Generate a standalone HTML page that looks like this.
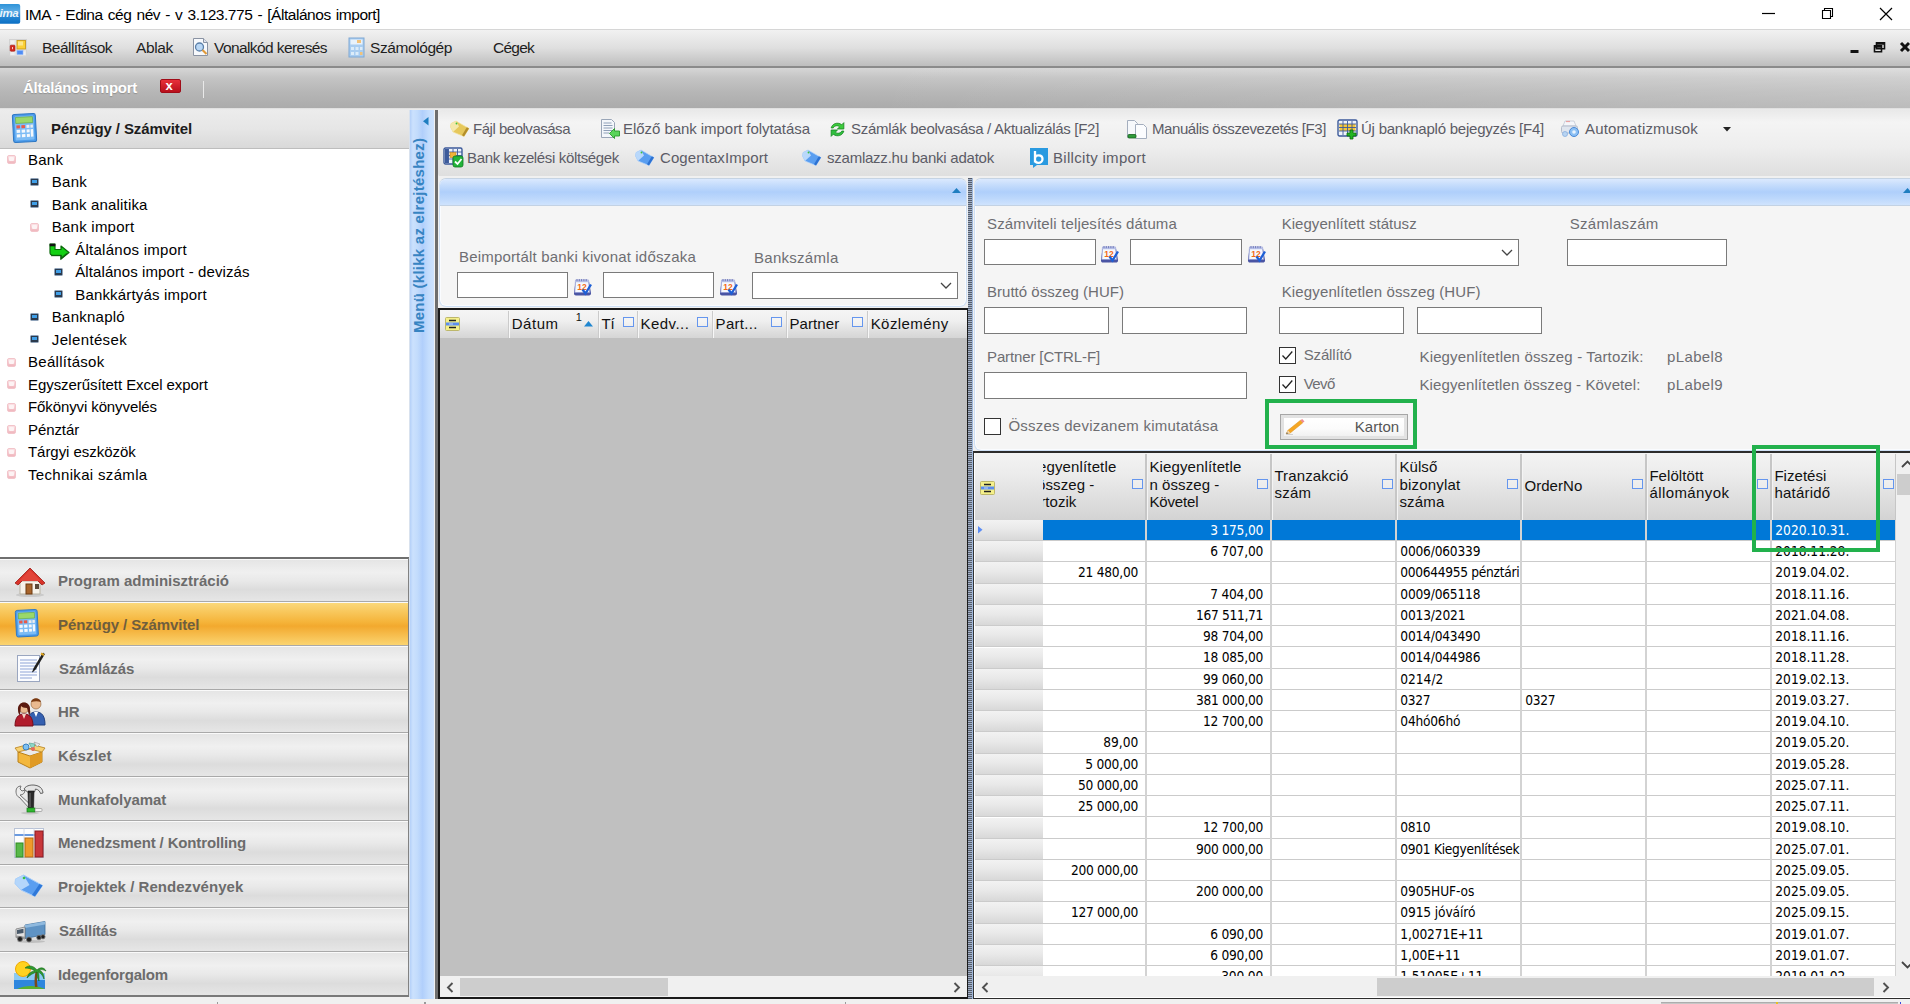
<!DOCTYPE html>
<html lang="hu"><head><meta charset="utf-8"><title>IMA - Általános import</title>
<style>
html,body{margin:0;padding:0;}
body{width:1910px;height:1004px;position:relative;overflow:hidden;background:#f0f0f0;font-family:"Liberation Sans",Arial,sans-serif;font-size:15px;}
div{position:absolute;box-sizing:border-box;}
.t{position:absolute;line-height:1;white-space:pre;}
svg{position:absolute;overflow:visible;}
.inp{background:#fff;border:1px solid #7a7a7a;}
.cell{position:absolute;}

</style></head>
<body>
<div style="left:0px;top:0px;width:1910px;height:29px;background:#fff;"></div>
<svg style="left:0;top:4px" width="21" height="20" viewBox="0 0 21 20"><defs><linearGradient id="ai" x1="0" y1="0" x2="0" y2="1"><stop offset="0" stop-color="#2f93d8"/><stop offset=".35" stop-color="#58aae4"/><stop offset=".6" stop-color="#2a8ad6"/><stop offset="1" stop-color="#0b6fc4"/></linearGradient></defs><rect x="-3" y="0" width="23.2" height="19.8" rx="2" fill="url(#ai)"/><text x="-0.5" y="12.6" font-family="Liberation Sans, sans-serif" font-size="11.5" font-style="italic" font-weight="bold" fill="#eaf4fc" letter-spacing="-0.3">ima</text></svg>
<span class="t" style="top:6.58px;font-size:15.5px;color:#000;left:25px;letter-spacing:-0.464px;word-spacing:1.3px;">IMA - Edina cég név - v 3.123.775 - [Általános import]</span>
<svg style="left:1750px;top:0" width="160" height="29" viewBox="0 0 160 29"><path d="M12 13.5h13" stroke="#000" stroke-width="1.2" fill="none"/><path d="M72.5 10.5h8v8h-8z M74.5 10.5v-2h8v8h-2" stroke="#000" stroke-width="1.1" fill="none"/><path d="M130 8l12 12M142 8l-12 12" stroke="#000" stroke-width="1.2" fill="none"/></svg>
<div style="left:0px;top:29px;width:1910px;height:36.6px;background:linear-gradient(#f1f1f1,#dfdfdf 50%,#bebebe);border-top:1px solid #d6d6d6;"></div>
<div style="left:0px;top:65.6px;width:1910px;height:2.4px;background:#8b8b8b;"></div>
<svg style="left:9px;top:39px" width="18" height="18" viewBox="0 0 18 18"><rect x=".5" y=".5" width="17" height="16.5" fill="#e3e3e3" stroke="#d2d2d2"/><rect x="1.5" y="1.5" width="4" height="3.5" fill="#f1f1f1"/><rect x="1.5" y="13" width="4" height="3" fill="#eee"/><rect x="14" y="12.5" width="2.5" height="3.5" fill="#eee"/><rect x="8" y="1.5" width="8.5" height="8.5" fill="#fbd035" stroke="#c99a1a" stroke-width=".9"/><rect x="9" y="2.5" width="5" height="4" fill="#fde68a"/><rect x="1.2" y="6.2" width="4.8" height="6" rx=".8" fill="#d2281e" stroke="#a81810" stroke-width=".6"/><rect x="3" y="8" width="1" height="2.2" fill="#f7c9c4"/><rect x="8" y="11.5" width="6" height="4" fill="#4f8df5" stroke="#8fb6fa" stroke-width=".6"/></svg>
<span class="t" style="top:39.98px;font-size:15.5px;color:#1e1e1e;left:42px;letter-spacing:-0.530px;">Beállítások</span>
<span class="t" style="top:39.98px;font-size:15.5px;color:#1e1e1e;left:136px;letter-spacing:-0.356px;">Ablak</span>
<svg style="left:191px;top:37px" width="20" height="20" viewBox="0 0 20 20"><path d="M2.5 1.5h10l4 4v13h-14z" fill="#f7f9fc" stroke="#8a93a3"/><path d="M12.5 1.5v4h4" fill="#dde3ee" stroke="#8a93a3"/><circle cx="8.5" cy="10" r="4" fill="#b9d7f5" stroke="#5a7fa8" stroke-width="1.3"/><path d="M11.5 13l4 4" stroke="#e09a3a" stroke-width="2.2"/></svg>
<span class="t" style="top:39.98px;font-size:15.5px;color:#1e1e1e;left:214px;letter-spacing:-0.585px;">Vonalkód keresés</span>
<svg style="left:348px;top:37px" width="18" height="21" viewBox="0 0 18 21"><rect x="1" y="1" width="15" height="19" fill="#a9cdf0" stroke="#7fa8d4"/><rect x="2.5" y="2.5" width="12" height="5" fill="#e8f2fb"/><rect x="9" y="3" width="4" height="3" fill="#f1c27a"/><rect x="3" y="10" width="3" height="3" fill="#dcecf9"/><rect x="7.5" y="10" width="3" height="3" fill="#dcecf9"/><rect x="12" y="10" width="2.5" height="3" fill="#dcecf9"/><rect x="3" y="15" width="3" height="3" fill="#dcecf9"/><rect x="7.5" y="15" width="3" height="3" fill="#dcecf9"/><rect x="12" y="15" width="2.5" height="3" fill="#f1c27a"/></svg>
<span class="t" style="top:39.98px;font-size:15.5px;color:#1e1e1e;left:370px;letter-spacing:-0.417px;">Számológép</span>
<span class="t" style="top:39.98px;font-size:15.5px;color:#1e1e1e;left:493px;letter-spacing:-0.762px;">Cégek</span>
<svg style="left:1845px;top:36px" width="65" height="24" viewBox="0 0 65 24"><rect x="5.5" y="14" width="8" height="3" fill="#111"/><g transform="translate(0,-.8)"><path d="M31.5 7.5h8v6h-8z M29.5 10.5h7v6h-7z" fill="#e6e6e6" stroke="#111" stroke-width="1.6"/><path d="M31 8.3h9 M29 11.3h8" stroke="#111" stroke-width="2.4"/></g><path d="M56 7l8 8M64 7l-8 8" stroke="#111" stroke-width="3"/></svg>
<div style="left:0px;top:68px;width:1910px;height:39.6px;background:linear-gradient(90deg,rgba(255,255,255,0),rgba(255,255,255,0) 45%,rgba(255,255,255,.2)),linear-gradient(#d6d6d6,#c4c4c4 25%,#b6b6b6 60%,#ababab);"></div>
<span class="t" style="top:80.00px;font-size:15px;color:#fff;left:23px;font-weight:bold;letter-spacing:-0.272px;text-shadow:0 1px 1px rgba(120,120,120,.6);">Általános import</span>
<div style="left:160px;top:79px;width:21px;height:14px;background:linear-gradient(#e8303a,#b8101c);border:1px solid #a00c18;border-radius:2px;"></div>
<span class="t" style="top:78.70px;font-size:13px;color:#fff;left:165.5px;font-weight:bold;">x</span>
<div style="left:203px;top:81px;width:1px;height:17px;background:#e9e9e9;"></div>
<div style="left:0px;top:107.6px;width:1910px;height:2.4px;background:linear-gradient(#dcdcdc,#efefef);"></div>
<div style="left:0px;top:110px;width:409px;height:887px;background:#fff;"></div>
<div style="left:0px;top:110px;width:409px;height:39px;background:linear-gradient(#ececec,#e6e6e6 50%,#d9d9d9);border-bottom:1px solid #bdbdbd;"></div>
<svg style="left:11px;top:112px" width="28.0" height="32.0" viewBox="0 0 28 32"><g transform="rotate(-3 14 16)"><rect x="2" y="2" width="23" height="28" rx="2" fill="#4b9bea" stroke="#2f78c4"/><rect x="4" y="4" width="19" height="24" rx="1" fill="#7dbcf5"/><rect x="5" y="5" width="17" height="6" fill="#9ad86a" stroke="#5fa63a" stroke-width=".6"/><rect x="5.5" y="13" width="3.5" height="3" fill="#e85a4a"/><rect x="10.5" y="13" width="3.5" height="3" fill="#e85a4a"/><rect x="15.5" y="13" width="3" height="3" fill="#eee"/><rect x="19.5" y="13" width="2.5" height="3" fill="#eee"/><rect x="5.5" y="17.5" width="3.5" height="3" fill="#f4f8fc"/><rect x="10.5" y="17.5" width="3.5" height="3" fill="#f4f8fc"/><rect x="15.5" y="17.5" width="3" height="3" fill="#f4f8fc"/><rect x="19.5" y="17.5" width="2.5" height="7.5" fill="#f4f8fc"/><rect x="5.5" y="22" width="3.5" height="3" fill="#f4f8fc"/><rect x="10.5" y="22" width="3.5" height="3" fill="#f4f8fc"/><rect x="15.5" y="22" width="3" height="3" fill="#f4f8fc"/></g></svg>
<span class="t" style="top:121.00px;font-size:15px;color:#1c1c1c;left:51px;font-weight:bold;letter-spacing:-0.126px;">Pénzügy / Számvitel</span>
<div style="left:6.6px;top:155.4px;width:9px;height:9px;background:linear-gradient(#fbe3e6,#f0b6bd);border:1px solid #f3c4ca;border-radius:2px;"><div style="left:1px;top:1px;width:5px;height:4px;background:#fdf3f4;border-radius:1px"></div></div>
<span class="t" style="top:151.90px;font-size:15px;color:#000;left:28px;letter-spacing:0.249px;">Bank</span>
<div style="left:29.8px;top:177.9px;width:9px;height:8px;background:#2b3a4d;border:1px solid #8fa3ba;border-radius:1.5px;"><div style="left:1px;top:1px;width:5px;height:3px;background:#3f9fe8;"></div></div>
<span class="t" style="top:174.40px;font-size:15px;color:#000;left:51.8px;letter-spacing:0.249px;">Bank</span>
<div style="left:29.8px;top:200.4px;width:9px;height:8px;background:#2b3a4d;border:1px solid #8fa3ba;border-radius:1.5px;"><div style="left:1px;top:1px;width:5px;height:3px;background:#3f9fe8;"></div></div>
<span class="t" style="top:196.90px;font-size:15px;color:#000;left:51.8px;letter-spacing:0.171px;">Bank analitika</span>
<div style="left:29.8px;top:222.9px;width:9px;height:9px;background:linear-gradient(#fbe3e6,#f0b6bd);border:1px solid #f3c4ca;border-radius:2px;"><div style="left:1px;top:1px;width:5px;height:4px;background:#fdf3f4;border-radius:1px"></div></div>
<span class="t" style="top:219.40px;font-size:15px;color:#000;left:51.8px;letter-spacing:0.232px;">Bank import</span>
<svg style="left:49px;top:242.9px" width="21" height="17" viewBox="0 0 21 17"><path d="M1 1h5v5.500h6V3l8 6.500-8 6.500V12.500H4a3 3 0 0 1-3-3z" fill="#12d012" stroke="#0a6a0a" stroke-width="1.200" stroke-linejoin="round"/><path d="M.700 .700h5.600v2.600H.700z" fill="#111"/><path d="M2 12.500h10v3l6-5" stroke="#0a5a0a" stroke-width="1.600" fill="none" opacity=".7"/></svg>
<span class="t" style="top:241.90px;font-size:15px;color:#000;left:75.2px;letter-spacing:0.265px;">Általános import</span>
<div style="left:54.2px;top:267.9px;width:9px;height:8px;background:#2b3a4d;border:1px solid #8fa3ba;border-radius:1.5px;"><div style="left:1px;top:1px;width:5px;height:3px;background:#3f9fe8;"></div></div>
<span class="t" style="top:264.40px;font-size:15px;color:#000;left:75.2px;letter-spacing:0.102px;">Általános import - devizás</span>
<div style="left:54.2px;top:290.4px;width:9px;height:8px;background:#2b3a4d;border:1px solid #8fa3ba;border-radius:1.5px;"><div style="left:1px;top:1px;width:5px;height:3px;background:#3f9fe8;"></div></div>
<span class="t" style="top:286.90px;font-size:15px;color:#000;left:75.2px;letter-spacing:0.184px;">Bankkártyás import</span>
<div style="left:29.8px;top:312.9px;width:9px;height:8px;background:#2b3a4d;border:1px solid #8fa3ba;border-radius:1.5px;"><div style="left:1px;top:1px;width:5px;height:3px;background:#3f9fe8;"></div></div>
<span class="t" style="top:309.40px;font-size:15px;color:#000;left:51.8px;letter-spacing:0.244px;">Banknapló</span>
<div style="left:29.8px;top:335.4px;width:9px;height:8px;background:#2b3a4d;border:1px solid #8fa3ba;border-radius:1.5px;"><div style="left:1px;top:1px;width:5px;height:3px;background:#3f9fe8;"></div></div>
<span class="t" style="top:331.90px;font-size:15px;color:#000;left:51.8px;letter-spacing:0.348px;">Jelentések</span>
<div style="left:6.6px;top:357.9px;width:9px;height:9px;background:linear-gradient(#fbe3e6,#f0b6bd);border:1px solid #f3c4ca;border-radius:2px;"><div style="left:1px;top:1px;width:5px;height:4px;background:#fdf3f4;border-radius:1px"></div></div>
<span class="t" style="top:354.40px;font-size:15px;color:#000;left:28px;letter-spacing:0.284px;">Beállítások</span>
<div style="left:6.6px;top:380.4px;width:9px;height:9px;background:linear-gradient(#fbe3e6,#f0b6bd);border:1px solid #f3c4ca;border-radius:2px;"><div style="left:1px;top:1px;width:5px;height:4px;background:#fdf3f4;border-radius:1px"></div></div>
<span class="t" style="top:376.90px;font-size:15px;color:#000;left:28px;letter-spacing:-0.072px;">Egyszerűsített Excel export</span>
<div style="left:6.6px;top:402.9px;width:9px;height:9px;background:linear-gradient(#fbe3e6,#f0b6bd);border:1px solid #f3c4ca;border-radius:2px;"><div style="left:1px;top:1px;width:5px;height:4px;background:#fdf3f4;border-radius:1px"></div></div>
<span class="t" style="top:399.40px;font-size:15px;color:#000;left:28px;letter-spacing:-0.106px;">Főkönyvi könyvelés</span>
<div style="left:6.6px;top:425.4px;width:9px;height:9px;background:linear-gradient(#fbe3e6,#f0b6bd);border:1px solid #f3c4ca;border-radius:2px;"><div style="left:1px;top:1px;width:5px;height:4px;background:#fdf3f4;border-radius:1px"></div></div>
<span class="t" style="top:421.90px;font-size:15px;color:#000;left:28px;letter-spacing:-0.086px;">Pénztár</span>
<div style="left:6.6px;top:447.9px;width:9px;height:9px;background:linear-gradient(#fbe3e6,#f0b6bd);border:1px solid #f3c4ca;border-radius:2px;"><div style="left:1px;top:1px;width:5px;height:4px;background:#fdf3f4;border-radius:1px"></div></div>
<span class="t" style="top:444.40px;font-size:15px;color:#000;left:28px;letter-spacing:-0.045px;">Tárgyi eszközök</span>
<div style="left:6.6px;top:470.4px;width:9px;height:9px;background:linear-gradient(#fbe3e6,#f0b6bd);border:1px solid #f3c4ca;border-radius:2px;"><div style="left:1px;top:1px;width:5px;height:4px;background:#fdf3f4;border-radius:1px"></div></div>
<span class="t" style="top:466.90px;font-size:15px;color:#000;left:28px;letter-spacing:0.330px;">Technikai számla</span>
<div style="left:0px;top:557px;width:409px;height:2px;background:#6f6f6f;"></div>
<div style="left:0px;top:558.6px;width:408px;height:43.72px;background:linear-gradient(#e5e5e5,#f0f0f0 30%,#e9e9e9 50%,#dcdcdc 72%,#e6e6e6);border-top:1px solid #fafafa;border-bottom:1px solid #a9a9a9;"></div>
<span class="t" style="top:573.10px;font-size:15px;color:#6c6c6c;left:58px;font-weight:bold;letter-spacing:0.005px;">Program adminisztráció</span>
<div style="left:0px;top:602.32px;width:408px;height:43.72px;background:linear-gradient(#fbd87a,#f5b43a 45%,#f2a92e 55%,#fbd470);border-top:1px solid #fafafa;border-bottom:1px solid #a9a9a9;"></div>
<span class="t" style="top:616.82px;font-size:15px;color:#6e5e3e;left:58px;font-weight:bold;letter-spacing:-0.105px;">Pénzügy / Számvitel</span>
<div style="left:0px;top:646.04px;width:408px;height:43.72px;background:linear-gradient(#e5e5e5,#f0f0f0 30%,#e9e9e9 50%,#dcdcdc 72%,#e6e6e6);border-top:1px solid #fafafa;border-bottom:1px solid #a9a9a9;"></div>
<span class="t" style="top:660.54px;font-size:15px;color:#6c6c6c;left:59px;font-weight:bold;letter-spacing:-0.066px;">Számlázás</span>
<div style="left:0px;top:689.76px;width:408px;height:43.72px;background:linear-gradient(#e5e5e5,#f0f0f0 30%,#e9e9e9 50%,#dcdcdc 72%,#e6e6e6);border-top:1px solid #fafafa;border-bottom:1px solid #a9a9a9;"></div>
<span class="t" style="top:704.26px;font-size:15px;color:#6c6c6c;left:58px;font-weight:bold;letter-spacing:0.014px;">HR</span>
<div style="left:0px;top:733.48px;width:408px;height:43.72px;background:linear-gradient(#e5e5e5,#f0f0f0 30%,#e9e9e9 50%,#dcdcdc 72%,#e6e6e6);border-top:1px solid #fafafa;border-bottom:1px solid #a9a9a9;"></div>
<span class="t" style="top:747.98px;font-size:15px;color:#6c6c6c;left:58px;font-weight:bold;letter-spacing:0.153px;">Készlet</span>
<div style="left:0px;top:777.2px;width:408px;height:43.72px;background:linear-gradient(#e5e5e5,#f0f0f0 30%,#e9e9e9 50%,#dcdcdc 72%,#e6e6e6);border-top:1px solid #fafafa;border-bottom:1px solid #a9a9a9;"></div>
<span class="t" style="top:791.70px;font-size:15px;color:#6c6c6c;left:58px;font-weight:bold;letter-spacing:-0.085px;">Munkafolyamat</span>
<div style="left:0px;top:820.9200000000001px;width:408px;height:43.72px;background:linear-gradient(#e5e5e5,#f0f0f0 30%,#e9e9e9 50%,#dcdcdc 72%,#e6e6e6);border-top:1px solid #fafafa;border-bottom:1px solid #a9a9a9;"></div>
<span class="t" style="top:835.42px;font-size:15px;color:#6c6c6c;left:58px;font-weight:bold;letter-spacing:-0.147px;">Menedzsment / Kontrolling</span>
<div style="left:0px;top:864.64px;width:408px;height:43.72px;background:linear-gradient(#e5e5e5,#f0f0f0 30%,#e9e9e9 50%,#dcdcdc 72%,#e6e6e6);border-top:1px solid #fafafa;border-bottom:1px solid #a9a9a9;"></div>
<span class="t" style="top:879.14px;font-size:15px;color:#6c6c6c;left:58px;font-weight:bold;letter-spacing:0.043px;">Projektek / Rendezvények</span>
<div style="left:0px;top:908.36px;width:408px;height:43.72px;background:linear-gradient(#e5e5e5,#f0f0f0 30%,#e9e9e9 50%,#dcdcdc 72%,#e6e6e6);border-top:1px solid #fafafa;border-bottom:1px solid #a9a9a9;"></div>
<span class="t" style="top:922.86px;font-size:15px;color:#6c6c6c;left:59px;font-weight:bold;letter-spacing:-0.248px;">Szállítás</span>
<div style="left:0px;top:952.08px;width:408px;height:43.72px;background:linear-gradient(#e5e5e5,#f0f0f0 30%,#e9e9e9 50%,#dcdcdc 72%,#e6e6e6);border-top:1px solid #fafafa;border-bottom:1px solid #a9a9a9;"></div>
<span class="t" style="top:966.58px;font-size:15px;color:#6c6c6c;left:58px;font-weight:bold;letter-spacing:-0.180px;">Idegenforgalom</span>
<div style="left:408px;top:558px;width:1.7px;height:439px;background:#828282;"></div>
<div style="left:0px;top:995.3px;width:409.7px;height:1.6px;background:#7a7a7a;"></div>
<svg style="left:13px;top:565.6px" width="34" height="32" viewBox="0 0 34 32"><ellipse cx="17" cy="29" rx="14" ry="2" fill="#bbb" opacity=".6"/><path d="M7 15h20v13H7z" fill="#f7f3ea" stroke="#b9b3a3"/><path d="M17 2L2 17l3 2L17 7l12 12 3-2z" fill="#d8332a" stroke="#9c1b15" stroke-width=".8"/><path d="M17 4L6 15h22z" fill="#e2453a"/><rect x="13" y="18" width="6" height="10" fill="#a8642a" stroke="#6e3d12"/><rect x="22" y="18" width="4" height="5" fill="#5b4a3a"/></svg>
<svg style="left:14px;top:608.32px" width="26.599999999999998" height="30.4" viewBox="0 0 28 32"><g transform="rotate(-3 14 16)"><rect x="2" y="2" width="23" height="28" rx="2" fill="#4b9bea" stroke="#2f78c4"/><rect x="4" y="4" width="19" height="24" rx="1" fill="#7dbcf5"/><rect x="5" y="5" width="17" height="6" fill="#9ad86a" stroke="#5fa63a" stroke-width=".6"/><rect x="5.5" y="13" width="3.5" height="3" fill="#e85a4a"/><rect x="10.5" y="13" width="3.5" height="3" fill="#e85a4a"/><rect x="15.5" y="13" width="3" height="3" fill="#eee"/><rect x="19.5" y="13" width="2.5" height="3" fill="#eee"/><rect x="5.5" y="17.5" width="3.5" height="3" fill="#f4f8fc"/><rect x="10.5" y="17.5" width="3.5" height="3" fill="#f4f8fc"/><rect x="15.5" y="17.5" width="3" height="3" fill="#f4f8fc"/><rect x="19.5" y="17.5" width="2.5" height="7.5" fill="#f4f8fc"/><rect x="5.5" y="22" width="3.5" height="3" fill="#f4f8fc"/><rect x="10.5" y="22" width="3.5" height="3" fill="#f4f8fc"/><rect x="15.5" y="22" width="3" height="3" fill="#f4f8fc"/></g></svg>
<svg style="left:15px;top:652.04px" width="32" height="32" viewBox="0 0 32 32"><rect x="2.5" y="3.5" width="22" height="26" fill="#fbfcff" stroke="#9aa6c0"/><path d="M5 8h17M5 11h17M5 14h17M5 17h17M5 20h17M5 23h17M5 26h12" stroke="#8fa4d6" stroke-width="1"/><path d="M28 1l-9 15-1.5 4 3-2.8L29.5 2z" fill="#222" stroke="#000" stroke-width=".6"/><path d="M26 1.5l3 1.5" stroke="#d8a020" stroke-width="2"/></svg>
<svg style="left:13px;top:695.76px" width="34" height="32" viewBox="0 0 34 32"><circle cx="23" cy="8" r="5" fill="#e9b98f" stroke="#8a5a30" stroke-width=".6"/><path d="M18 6c1-5 9-5 10 0-3-1-6-1-10 0z" fill="#7a3a12"/><path d="M14 29c0-9 3-13 9-13s9 4 9 13z" fill="#3560b0" stroke="#1f3f80"/><path d="M21 16l2 5 2-5z" fill="#fff"/><circle cx="11" cy="12" r="5" fill="#e9b98f" stroke="#8a5a30" stroke-width=".6"/><path d="M5 14c-1-10 13-10 12 0 1 4-1 5-1 5l-2-7c-3 0-5-1-6-2l-1 9s-2-1-2-5z" fill="#5a1a10"/><path d="M2 30c0-8 3-12 9-12s9 4 9 12z" fill="#b01c2c" stroke="#7a0c18"/><path d="M9 18l2 5 2-5z" fill="#f4d4c4"/></svg>
<svg style="left:13px;top:739.48px" width="34" height="32" viewBox="0 0 34 32"><path d="M5 13l12 4 12-4v10l-12 6-12-6z" fill="#f3b73c" stroke="#b8801a"/><path d="M17 17v12l12-6V13z" fill="#e09a24"/><path d="M5 13l-3-4 11-3 4 4zM29 13l3-4-11-3-4 4z" fill="#f8d272" stroke="#b8801a" stroke-width=".8"/><circle cx="13" cy="8" r="3" fill="#7ec0f0" stroke="#3a80c0"/><path d="M16 4l6 1-2 7z" fill="#8ed8c8" stroke="#4a9a8a" stroke-width=".6"/><path d="M21 3l6 2-3 3z" fill="#e8e8e8" stroke="#999" stroke-width=".6"/><circle cx="20" cy="10" r="2" fill="#e86a5a"/></svg>
<svg style="left:13px;top:783.2px" width="34" height="34" viewBox="0 0 34 34"><ellipse cx="17" cy="30" rx="9" ry="1.500" fill="#bbb" opacity=".7"/><path d="M3 8c0-3 2-5 5-5l-1 3 2 2 3-1c0 3-2 5-5 5l12 11-2.500 2.500L6 14c-1.500 0-3-2.500-3-6z" fill="#ededed" stroke="#666" stroke-width=".9"/><path d="M11 6c2-4 9-5 14-3 3 1 5 4 5 7l-2.500.500c-.500-2-2-4-5-4.500l-1 3h-7z" fill="#e4e4e4" stroke="#555" stroke-width=".9"/><path d="M15 8h6l-.500 18h-5z" fill="#2a2a2a" stroke="#111" stroke-width=".6"/><path d="M17 10v14" stroke="#777" stroke-width="1"/><rect x="14" y="25" width="8" height="4" fill="#2fb82f" stroke="#157a15" stroke-width=".7"/><rect x="22" y="25.500" width="7" height="3" rx="1" fill="#f2f2f2" stroke="#888" stroke-width=".6"/></svg>
<svg style="left:13px;top:825.9200000000001px" width="32" height="34" viewBox="0 0 32 34"><rect x="1.5" y="2.5" width="29" height="29" fill="#fdfdfd" stroke="#b9c3d6"/><path d="M1.5 9h29" stroke="#6a9ae0" stroke-width="2"/><path d="M11 2.5v29M21 2.5v29" stroke="#d5dbe8"/><rect x="3" y="17" width="7" height="14" fill="#58b848" stroke="#2f8a22"/><rect x="12" y="12" width="8" height="19" fill="#f09a2a" stroke="#b86a10"/><rect x="22" y="5" width="8" height="26" fill="#c8363a" stroke="#8a1a1e"/></svg>
<svg style="left:14px;top:873.64px" width="30.0" height="24.0" viewBox="0 0 30 24"><path d="M1.500 5l8-4 19 10.500-7.500 11-14-6.500L1 9.500z" fill="#5a9ef0" stroke="#a4ccfa" stroke-width="1"/><path d="M1.500 5l8-4 6 10-8.500 5L1 9.500z" fill="#b4d6fb"/><path d="M21 22.500l7.500-11-3-1.500-7.500 11z" fill="#2f78d8"/><circle cx="10" cy="4" r="1.300" fill="#3cc43c"/></svg>
<svg style="left:14px;top:920.36px" width="34" height="24" viewBox="0 0 34 24"><ellipse cx="17" cy="21.500" rx="14" ry="1.500" fill="#aaa" opacity=".6"/><path d="M11 5l20-3.500v13l-20 4z" fill="#5f93c4" stroke="#3f6f9c" stroke-width=".8"/><path d="M11 5l20-3.500v3l-20 3.500z" fill="#8fb9de"/><path d="M2 9l9-2v12l-9-1.500z" fill="#e2e2e2" stroke="#7a7a7a" stroke-width=".8"/><path d="M3 10l6.500-1.300v4.300L3 14z" fill="#4a5a6a"/><path d="M2 15.500l9 1.200v2.500l-9-1.500z" fill="#9a9a9a"/><circle cx="6" cy="19" r="2.500" fill="#1f1f1f" stroke="#777" stroke-width=".8"/><circle cx="15" cy="19.500" r="2.500" fill="#1f1f1f" stroke="#777" stroke-width=".8"/><circle cx="25" cy="17.500" r="2.300" fill="#1f1f1f" stroke="#777" stroke-width=".8"/><circle cx="29" cy="16.800" r="2.100" fill="#1f1f1f" stroke="#777" stroke-width=".8"/></svg>
<svg style="left:13px;top:957.08px" width="34" height="34" viewBox="0 0 34 34"><rect x="1" y="16" width="31" height="11" fill="#8ccaf4"/><rect x="1" y="23" width="31" height="9" fill="#2e86de"/><circle cx="10" cy="12" r="7.5" fill="#ffd21f" stroke="#f0a800"/><path d="M4 32c8-4 20-4 28 0z" fill="#58b030"/><path d="M22 30c-1-8 0-13 1-17l2 .5c-1 5-1.5 10-.5 16.500z" fill="#7a4a1a"/><path d="M24 13c-4-5-9-5-12-2 4 0 7 1 10 3-4 0-7 3-8 7 3-3 6-5 10-6 0 3 0 6 2 9 0-4 0-7-1-9 3 1 5 4 6 7 0-5-2-8-5-9 3-1 5 0 7 1-2-4-6-4-9-1z" fill="#2e9a2e" stroke="#156a15" stroke-width=".6"/></svg>
<div style="left:409px;top:110px;width:1px;height:888.7px;background:#d9e2ee;"></div>
<div style="left:409.7px;top:110px;width:24.8px;height:888.7px;background:linear-gradient(90deg,#b4d0f8,#cbe1fd 12%,#c3dcfc 30%,#b1cffb 52%,#c4ddfd 78%,#cde2fd);"></div>
<div style="left:434.5px;top:110px;width:1px;height:888.7px;background:#e8eef7;"></div>
<svg style="left:422.6px;top:117.3px" width="5.500" height="8.500" viewBox="0 0 5.500 8.500"><path d="M5.500 0L0 4.250l5.500 4.250z" fill="#1f7ec0"/></svg>
<div style="left:407px;top:332.5px;width:0;height:0;"><span class="t" style="left:0;top:0;transform-origin:0 0;transform:rotate(-90deg);font-size:15px;font-weight:bold;color:#3784c2;letter-spacing:0.25px;line-height:24px;">Menü (klikk az elrejtéshez)</span></div>
<div style="left:435.3px;top:110px;width:2.5px;height:888.7px;background:#6e6e6e;"></div>
<div style="left:438px;top:110px;width:1472px;height:67px;background:linear-gradient(#e9e9e9,#f4f4f4 18%,#eeeeee 55%,#dedede);border-radius:4px 0 0 4px;"></div>
<svg style="left:450px;top:121px" width="20" height="16" viewBox="0 0 20 16"><path d="M1 2.500l5-2.500 13 7.500-5 8L3 11 .500 6z" fill="#e6c85c" stroke="#f2e2a2" stroke-width=".7"/><path d="M1 2.500l5-2.500 3 5.500-6 5.500L.500 6z" fill="#f5e8ac"/><path d="M14 15.500l5-8-2.200-1.200-4.800 8z" fill="#b48e2a"/><circle cx="6.500" cy="2.500" r=".9" fill="#3cc43c"/></svg>
<span class="t" style="top:121.00px;font-size:15px;color:#5c5c66;left:473px;letter-spacing:-0.482px;">Fájl beolvasása</span>
<svg style="left:600px;top:118px" width="21" height="22" viewBox="0 0 21 22"><path d="M1.500 1.500h10l3 3v15h-13z" fill="#f4f7fb" stroke="#9aa6b8"/><path d="M3.500 5h8M3.500 7.500h9M3.500 10h9M3.500 12.500h9M3.500 15h6" stroke="#8fa0b8" stroke-width="1"/><path d="M19.500 13v5h-5v2.500l-5-5 5-5V13z" fill="#5ad45a" stroke="#2a9a2a" stroke-width=".9"/></svg>
<span class="t" style="top:121.00px;font-size:15px;color:#5c5c66;left:623px;letter-spacing:-0.051px;">Előző bank import folytatása</span>
<svg style="left:828px;top:119.5px" width="19" height="19" viewBox="0 0 18 17"><path d="M3 7c1-4 6-6 10-3l2-2v6H9l2-2c-2-2-5-1-6 1z" fill="#3ccc3c" stroke="#1c8a22" stroke-width=".8"/><path d="M15 10c-1 4-6 6-10 3l-2 2V9h6l-2 2c2 2 5 1 6-1z" fill="#2fbf3f" stroke="#168a22" stroke-width=".8"/></svg>
<span class="t" style="top:121.00px;font-size:15px;color:#5c5c66;left:851px;letter-spacing:-0.297px;">Számlák beolvasása / Aktualizálás [F2]</span>
<svg style="left:1126px;top:119px" width="22" height="21" viewBox="0 0 22 21"><path d="M1.500 1.500h7l3 3v14h-10z" fill="#f6f8fb" stroke="#a4aebe"/><path d="M9.500 5.500h8l3 3v11h-11z" fill="#fbfcfe" stroke="#a4aebe"/><rect x="2" y="15.500" width="8" height="3.500" rx="1" fill="#2e9a3a" stroke="#14601c" stroke-width=".8"/></svg>
<span class="t" style="top:121.00px;font-size:15px;color:#5c5c66;left:1152px;letter-spacing:-0.427px;">Manuális összevezetés [F3]</span>
<svg style="left:1337px;top:119px" width="21" height="21" viewBox="0 0 21 21"><rect x="1" y="1" width="19" height="16" rx="1.500" fill="#eef3fb" stroke="#3c5a9a" stroke-width="1.400"/><rect x="2.500" y="5" width="16" height="7" fill="#f4c63a"/><path d="M6 2v14M10.500 2v14M15 2v14M2 5h17M2 8.500h17M2 12h17" stroke="#3c5a9a" stroke-width=".9"/><path d="M12 12h3v-3h3v3h3v3h-3v3h-3v-3h-3z" transform="translate(-2,2)" fill="#22b422" stroke="#0c6a0c" stroke-width=".8"/></svg>
<span class="t" style="top:121.00px;font-size:15px;color:#5c5c66;left:1361px;letter-spacing:-0.233px;">Új banknapló bejegyzés [F4]</span>
<svg style="left:1560px;top:119px" width="21" height="19" viewBox="0 0 21 19"><path d="M5 2h9l2 5H3z" fill="#f4f6fa" stroke="#c2c8d4" stroke-width=".8"/><path d="M6 2.500h4" stroke="#e8a0a0" stroke-width="1.200"/><rect x="1.500" y="7" width="16" height="7" rx="1.500" fill="#dfe5ee" stroke="#b4bccb"/><circle cx="14" cy="13" r="4.500" fill="#8cc0f4" stroke="#4a8ad8"/><circle cx="14" cy="13" r="1.800" fill="#eaf4fe"/><circle cx="5" cy="15" r="2.500" fill="#b8d4f2" stroke="#88aee0" stroke-width=".8"/></svg>
<span class="t" style="top:121.00px;font-size:15px;color:#5c5c66;left:1585px;letter-spacing:0.152px;">Automatizmusok</span>
<svg style="left:1723px;top:127px" width="8" height="5" viewBox="0 0 8 5"><path d="M0 0h8l-4 4.500z" fill="#222"/></svg>
<svg style="left:443px;top:147px" width="21" height="21" viewBox="0 0 21 21"><rect x="1" y="1" width="18" height="16" rx="1.500" fill="#eef3fb" stroke="#3c5a9a" stroke-width="1.400"/><path d="M5.500 2v14M10 2v14M14.500 2v14M2 5h17M2 8.500h17M2 12h17" stroke="#3c5a9a" stroke-width=".9"/><rect x="2" y="2" width="3.500" height="14" fill="#3c5a9a"/><rect x="7" y="5.500" width="6" height="5" fill="#f0b43a" stroke="#c8861a" stroke-width=".6"/><rect x="10" y="9" width="10" height="11" rx="2" fill="#22b43a" stroke="#0e7a20" stroke-width=".8"/><path d="M12 14.500l2.500 2.500 4-5" stroke="#fff" stroke-width="1.800" fill="none"/></svg>
<span class="t" style="top:149.80px;font-size:15px;color:#5c5c66;left:467px;letter-spacing:-0.352px;">Bank kezelési költségek</span>
<svg style="left:635px;top:150px" width="20" height="16" viewBox="0 0 20 16"><path d="M1 2.500l5-2.500 13 7.500-5 8L3 11 .500 6z" fill="#5a9ef0" stroke="#b4d4fa" stroke-width=".7"/><path d="M1 2.500l5-2.500 3 5.500-6 5.500L.500 6z" fill="#b9d8fb"/><path d="M14 15.500l5-8-2.200-1.200-4.800 8z" fill="#2d72d2"/><circle cx="6.500" cy="2.500" r=".9" fill="#3cc43c"/></svg>
<span class="t" style="top:149.80px;font-size:15px;color:#5c5c66;left:660px;letter-spacing:0.090px;">CogentaxImport</span>
<svg style="left:802px;top:150px" width="20" height="16" viewBox="0 0 20 16"><path d="M1 2.500l5-2.500 13 7.500-5 8L3 11 .500 6z" fill="#5a9ef0" stroke="#b4d4fa" stroke-width=".7"/><path d="M1 2.500l5-2.500 3 5.500-6 5.500L.500 6z" fill="#b9d8fb"/><path d="M14 15.500l5-8-2.200-1.200-4.800 8z" fill="#2d72d2"/><circle cx="6.500" cy="2.500" r=".9" fill="#3cc43c"/></svg>
<span class="t" style="top:149.80px;font-size:15px;color:#5c5c66;left:827px;letter-spacing:-0.234px;">szamlazz.hu banki adatok</span>
<svg style="left:1029px;top:147px" width="20" height="21" viewBox="0 0 20 21"><path d="M1 1h18v17H8l-4 3v-3H1z" fill="#2a9ae0"/><path d="M6 4v11.500M6.200 13.500c0 1.500 1.300 2.300 3.300 2.300s4-1.300 4-3.800-1.800-3.700-3.800-3.700-3.500 1-3.500 2.500" stroke="#fff" stroke-width="2.300" fill="none"/></svg>
<span class="t" style="top:149.80px;font-size:15px;color:#5c5c66;left:1053px;letter-spacing:0.309px;">Billcity import</span>
<div style="left:438px;top:176px;width:1472px;height:2px;background:#f0f0f0;"></div>
<div style="left:438.8px;top:178.4px;width:528.2px;height:128.6px;background:#f5f5f5;border:1px solid #cfe0f5;border-top-color:#c5d3e3;border-radius:7px;box-shadow:0 0 0 1px #fafcff inset;"></div>
<div style="left:439.8px;top:179.4px;width:526.2px;height:26.6px;background:linear-gradient(#dbe9fe,#c6ddfc 22%,#afcffb 50%,#bdd8fc 75%,#cfe3fd);border-radius:6px 6px 0 0;border-bottom:1px solid #c3d2e4;"></div>
<svg style="left:952px;top:188.3px" width="9" height="5" viewBox="0 0 9 5"><path d="M0 5h9L4.500 0z" fill="#1f7ec0"/></svg>
<span class="t" style="top:249.00px;font-size:15px;color:#6e6e72;left:459px;letter-spacing:0.177px;">Beimportált banki kivonat időszaka</span>
<span class="t" style="top:249.50px;font-size:15px;color:#6e6e72;left:754px;letter-spacing:0.280px;">Bankszámla</span>
<div class="inp" style="left:457px;top:272px;width:111px;height:26px;"></div>
<svg style="left:573px;top:278px" width="20" height="19" viewBox="0 0 20 19"><path d="M2.500 3.500h13.500l2 11.500c.200 1.500-.800 2.500-2 2.500H3c-1.500 0-2.200-1-2-2.500z" fill="#4a55a4"/><path d="M2.500 2h13l1.200 12.500H1.800z" fill="#f6f8fe" stroke="#8a94d0" stroke-width=".7"/><path d="M2.500 2h13l.2 2.200H2.300z" fill="#b9c1e8"/><path d="M4 1v2.200M6.300 1v2.200M8.600 1v2.200M10.900 1v2.200M13.200 1v2.200" stroke="#6a74b8" stroke-width=".9"/><text x="4.200" y="11.500" font-family="Liberation Sans, sans-serif" font-size="8.500" font-weight="bold" fill="#f36a12">12</text><path d="M9.500 11.500l3 4 5.500-9" stroke="#1d5fd6" stroke-width="2.300" fill="none"/></svg>
<div class="inp" style="left:603px;top:272px;width:111px;height:26px;"></div>
<svg style="left:719px;top:278px" width="20" height="19" viewBox="0 0 20 19"><path d="M2.500 3.500h13.500l2 11.500c.200 1.500-.800 2.500-2 2.500H3c-1.500 0-2.200-1-2-2.500z" fill="#4a55a4"/><path d="M2.500 2h13l1.200 12.500H1.800z" fill="#f6f8fe" stroke="#8a94d0" stroke-width=".7"/><path d="M2.500 2h13l.2 2.200H2.300z" fill="#b9c1e8"/><path d="M4 1v2.200M6.300 1v2.200M8.600 1v2.200M10.900 1v2.200M13.200 1v2.200" stroke="#6a74b8" stroke-width=".9"/><text x="4.200" y="11.500" font-family="Liberation Sans, sans-serif" font-size="8.500" font-weight="bold" fill="#f36a12">12</text><path d="M9.500 11.500l3 4 5.500-9" stroke="#1d5fd6" stroke-width="2.300" fill="none"/></svg>
<div class="inp" style="left:752px;top:272px;width:206px;height:27px;"></div>
<svg style="left:940px;top:282.0px" width="12" height="7" viewBox="0 0 12 7"><path d="M1 1l5 5 5-5" stroke="#444" stroke-width="1.300" fill="none"/></svg>
<div style="left:438px;top:308px;width:530.4px;height:691px;background:#c0c0c0;border:2px solid #1a1a1a;border-right:1.4px solid #1a1a1a;"></div>
<div style="left:440px;top:310px;width:527px;height:27.8px;background:linear-gradient(#f5f5f5,#efefef 40%,#dddddd 80%,#d5d5d5);"></div>
<svg style="left:445px;top:317px" width="15" height="14" viewBox="0 0 15 14"><rect x=".5" y=".5" width="14" height="13" rx="1" fill="#f5f08a" stroke="#bdb76b"/><rect x="1" y="5.500" width="13" height="3" fill="#5b8df0"/><path d="M4 3.500h7M4 10.500h7" stroke="#222" stroke-width="1.300"/><path d="M4 7h4" stroke="#c8d8fa" stroke-width="1"/></svg>
<div style="left:507.6px;top:311px;width:1.2px;height:26.5px;background:#cbcbcb;"></div>
<div style="left:508.8px;top:311px;width:1px;height:26.5px;background:#f7f7f7;"></div>
<span class="t" style="top:315.60px;font-size:15px;color:#111;left:511.7px;letter-spacing:0.562px;">Dátum</span>
<div style="left:597.6px;top:311px;width:1.2px;height:26.5px;background:#cbcbcb;"></div>
<div style="left:598.8px;top:311px;width:1px;height:26.5px;background:#f7f7f7;"></div>
<span class="t" style="top:315.60px;font-size:15px;color:#111;left:601.5px;letter-spacing:-0.172px;">Tí</span>
<div style="left:636.6px;top:311px;width:1.2px;height:26.5px;background:#cbcbcb;"></div>
<div style="left:637.8px;top:311px;width:1px;height:26.5px;background:#f7f7f7;"></div>
<span class="t" style="top:315.60px;font-size:15px;color:#111;left:640.4px;letter-spacing:0.487px;">Kedv...</span>
<div style="left:711.6px;top:311px;width:1.2px;height:26.5px;background:#cbcbcb;"></div>
<div style="left:712.8px;top:311px;width:1px;height:26.5px;background:#f7f7f7;"></div>
<span class="t" style="top:315.60px;font-size:15px;color:#111;left:715.6px;letter-spacing:0.283px;">Part...</span>
<div style="left:785.6px;top:311px;width:1.2px;height:26.5px;background:#cbcbcb;"></div>
<div style="left:786.8px;top:311px;width:1px;height:26.5px;background:#f7f7f7;"></div>
<span class="t" style="top:315.60px;font-size:15px;color:#111;left:789.4px;letter-spacing:0.114px;">Partner</span>
<div style="left:866.6px;top:311px;width:1.2px;height:26.5px;background:#cbcbcb;"></div>
<div style="left:867.8px;top:311px;width:1px;height:26.5px;background:#f7f7f7;"></div>
<span class="t" style="top:315.60px;font-size:15px;color:#111;left:870.7px;letter-spacing:0.422px;">Közlemény</span>
<span class="t" style="top:311.59px;font-size:11px;color:#111;left:575.8px;">1</span>
<svg style="left:584px;top:321.3px" width="9" height="5.5" viewBox="0 0 9 5.5"><path d="M0 5.5h9L4.500 0z" fill="#1f86d0"/></svg>
<div style="left:622.5px;top:316.5px;width:11px;height:10px;border:1px solid #6596ee;background:rgba(255,255,255,.3);"></div>
<div style="left:697px;top:316.5px;width:11px;height:10px;border:1px solid #6596ee;background:rgba(255,255,255,.3);"></div>
<div style="left:771px;top:316.5px;width:11px;height:10px;border:1px solid #6596ee;background:rgba(255,255,255,.3);"></div>
<div style="left:852px;top:316.5px;width:11px;height:10px;border:1px solid #6596ee;background:rgba(255,255,255,.3);"></div>
<div style="left:440px;top:976px;width:527px;height:21px;background:#f0f0f0;"></div>
<div style="left:460.4px;top:977.8px;width:207.8px;height:18px;background:#cdcdcd;"></div>
<svg style="left:445.5px;top:981.5px" width="8" height="11" viewBox="0 0 8 11"><path d="M6.500 1L2 5.500 6.500 10" stroke="#505050" stroke-width="1.900" fill="none"/></svg>
<svg style="left:953px;top:981.5px" width="8" height="11" viewBox="0 0 8 11"><path d="M1.500 1L6 5.500 1.500 10" stroke="#505050" stroke-width="1.900" fill="none"/></svg>
<div style="left:968.4px;top:178px;width:4.6px;height:821px;background:repeating-linear-gradient(0deg,#555e6c 0 1px,#a3b1c8 1px 2px);border-right:1px solid #9fb8dc;"></div>
<div style="left:974px;top:178.4px;width:940px;height:272.6px;background:#f5f5f5;border:1px solid #cfe0f5;border-top-color:#c5d3e3;border-radius:7px 0 0 7px;box-shadow:0 0 0 1px #fafcff inset;"></div>
<div style="left:975px;top:179.4px;width:935px;height:26.6px;background:linear-gradient(#dbe9fe,#c6ddfc 22%,#afcffb 50%,#bdd8fc 75%,#cfe3fd);border-radius:6px 0 0 0;border-bottom:1px solid #c3d2e4;"></div>
<svg style="left:1902.8px;top:188.3px" width="9" height="5" viewBox="0 0 9 5"><path d="M0 5h9L4.500 0z" fill="#1f7ec0"/></svg>
<span class="t" style="top:215.70px;font-size:15px;color:#6e6e72;left:987px;letter-spacing:0.146px;">Számviteli teljesítés dátuma</span>
<div class="inp" style="left:984px;top:239px;width:112px;height:26px;"></div>
<svg style="left:1100px;top:245px" width="20" height="19" viewBox="0 0 20 19"><path d="M2.500 3.500h13.500l2 11.500c.200 1.500-.800 2.500-2 2.500H3c-1.500 0-2.200-1-2-2.500z" fill="#4a55a4"/><path d="M2.500 2h13l1.200 12.500H1.800z" fill="#f6f8fe" stroke="#8a94d0" stroke-width=".7"/><path d="M2.500 2h13l.2 2.200H2.300z" fill="#b9c1e8"/><path d="M4 1v2.200M6.300 1v2.200M8.600 1v2.200M10.900 1v2.200M13.200 1v2.200" stroke="#6a74b8" stroke-width=".9"/><text x="4.200" y="11.500" font-family="Liberation Sans, sans-serif" font-size="8.500" font-weight="bold" fill="#f36a12">12</text><path d="M9.500 11.500l3 4 5.500-9" stroke="#1d5fd6" stroke-width="2.300" fill="none"/></svg>
<div class="inp" style="left:1130px;top:239px;width:112px;height:26px;"></div>
<svg style="left:1247px;top:245px" width="20" height="19" viewBox="0 0 20 19"><path d="M2.500 3.500h13.500l2 11.500c.200 1.500-.800 2.500-2 2.500H3c-1.500 0-2.200-1-2-2.500z" fill="#4a55a4"/><path d="M2.500 2h13l1.200 12.500H1.800z" fill="#f6f8fe" stroke="#8a94d0" stroke-width=".7"/><path d="M2.500 2h13l.2 2.200H2.300z" fill="#b9c1e8"/><path d="M4 1v2.200M6.300 1v2.200M8.600 1v2.200M10.900 1v2.200M13.200 1v2.200" stroke="#6a74b8" stroke-width=".9"/><text x="4.200" y="11.500" font-family="Liberation Sans, sans-serif" font-size="8.500" font-weight="bold" fill="#f36a12">12</text><path d="M9.500 11.500l3 4 5.500-9" stroke="#1d5fd6" stroke-width="2.300" fill="none"/></svg>
<span class="t" style="top:215.70px;font-size:15px;color:#6e6e72;left:1281.7px;letter-spacing:0.036px;">Kiegyenlített státusz</span>
<div class="inp" style="left:1279px;top:239px;width:240px;height:27px;"></div>
<svg style="left:1501px;top:249.0px" width="12" height="7" viewBox="0 0 12 7"><path d="M1 1l5 5 5-5" stroke="#444" stroke-width="1.300" fill="none"/></svg>
<span class="t" style="top:215.70px;font-size:15px;color:#6e6e72;left:1569.7px;letter-spacing:0.314px;">Számlaszám</span>
<div class="inp" style="left:1567px;top:239px;width:160px;height:27px;"></div>
<span class="t" style="top:284.00px;font-size:15px;color:#6e6e72;left:987px;letter-spacing:0.016px;">Bruttó összeg (HUF)</span>
<div class="inp" style="left:984px;top:306.5px;width:125px;height:27px;"></div>
<div class="inp" style="left:1122px;top:306.5px;width:125px;height:27px;"></div>
<span class="t" style="top:284.00px;font-size:15px;color:#6e6e72;left:1281.7px;letter-spacing:0.140px;">Kiegyenlítetlen összeg (HUF)</span>
<div class="inp" style="left:1279px;top:306.5px;width:125px;height:27px;"></div>
<div class="inp" style="left:1417px;top:306.5px;width:125px;height:27px;"></div>
<span class="t" style="top:349.30px;font-size:15px;color:#6e6e72;left:987px;letter-spacing:-0.127px;">Partner [CTRL-F]</span>
<div class="inp" style="left:984px;top:371.5px;width:263px;height:27px;"></div>
<div style="left:1279px;top:347px;width:17px;height:17px;background:#fff;border:1px solid #333;"></div>
<svg style="left:1279px;top:347px" width="17" height="17" viewBox="0 0 17 17"><path d="M3.500 8.500l3.300 3.500 6.500-7.500" stroke="#222" stroke-width="1.300" fill="none"/></svg>
<span class="t" style="top:347.00px;font-size:15px;color:#6e6e72;left:1303.7px;letter-spacing:-0.150px;">Szállító</span>
<div style="left:1279px;top:376px;width:17px;height:17px;background:#fff;border:1px solid #333;"></div>
<svg style="left:1279px;top:376px" width="17" height="17" viewBox="0 0 17 17"><path d="M3.500 8.500l3.300 3.500 6.500-7.500" stroke="#222" stroke-width="1.300" fill="none"/></svg>
<span class="t" style="top:375.90px;font-size:15px;color:#6e6e72;left:1303.7px;letter-spacing:-0.594px;">Vevő</span>
<span class="t" style="top:348.60px;font-size:15px;color:#6e6e72;left:1419.5px;letter-spacing:0.147px;">Kiegyenlítetlen összeg - Tartozik:</span>
<span class="t" style="top:348.60px;font-size:15px;color:#6e6e72;left:1667px;letter-spacing:0.373px;">pLabel8</span>
<span class="t" style="top:377.40px;font-size:15px;color:#6e6e72;left:1419.5px;letter-spacing:0.102px;">Kiegyenlítetlen összeg - Követel:</span>
<span class="t" style="top:377.40px;font-size:15px;color:#6e6e72;left:1667px;letter-spacing:0.373px;">pLabel9</span>
<div style="left:984.4px;top:418.3px;width:17px;height:17px;background:#fff;border:1px solid #333;"></div>
<span class="t" style="top:418.20px;font-size:15px;color:#6e6e72;left:1008.4px;letter-spacing:0.244px;">Összes devizanem kimutatása</span>
<div style="left:1280.4px;top:414px;width:127.2px;height:25.7px;background:#e2e2e2;border:1px solid #a6a6a6;"></div>
<div style="left:1284.3px;top:417.8px;width:119.5px;height:18px;background:linear-gradient(#ffffff,#fbfbfb 60%,#f1f1f1);"></div>
<svg style="left:1285px;top:418px" width="21" height="18" viewBox="0 0 21 18"><path d="M1.200 15.800L3 12.300 15.500 2.200l2.300 2.600L5.200 15z" fill="#f5a623" stroke="#d98a10" stroke-width=".5"/><path d="M1.200 15.800L3 12.300l2.200 2.700z" fill="#f1d7b0"/><path d="M1.200 15.800l.8-1.600 1 1.200z" fill="#444"/><path d="M15.500 2.200l1.700-1.300 2.300 2.600-1.700 1.300z" fill="#ee8a96"/><path d="M1 16.500h7" stroke="#cfcfcf" stroke-width="1"/></svg>
<span class="t" style="top:418.60px;font-size:15px;color:#555;left:1354.7px;letter-spacing:0.049px;">Karton</span>
<div style="left:973.2px;top:451px;width:936.8px;height:548.5px;background:#fff;border:2px solid #2c2c2c;border-left:1.5px solid #333;border-bottom-width:2.4px;border-right:none;"></div>
<div style="left:975px;top:453px;width:921px;height:67px;background:linear-gradient(#f3f3f3,#ececec 30%,#e0e0e0 65%,#d3d3d3);"></div>
<span class="t" style="top:459.00px;font-size:15px;color:#111;left:1024.4px;letter-spacing:0.138px;">Kiegyenlítetle</span>
<span class="t" style="top:476.60px;font-size:15px;color:#111;left:1024.4px;letter-spacing:0.080px;">n összeg -</span>
<span class="t" style="top:494.20px;font-size:15px;color:#111;left:1024.4px;letter-spacing:0.039px;">Tartozik</span>
<div style="left:1145.4px;top:454px;width:1.3px;height:66px;background:#c6c6c6;"></div>
<div style="left:1146.7px;top:454px;width:1px;height:66px;background:#f4f4f4;"></div>
<div style="left:1132px;top:479px;width:11px;height:10px;border:1px solid #6596ee;background:rgba(255,255,255,.3);"></div>
<span class="t" style="top:459.00px;font-size:15px;color:#111;left:1149.4px;letter-spacing:0.138px;">Kiegyenlítetle</span>
<span class="t" style="top:476.60px;font-size:15px;color:#111;left:1149.4px;letter-spacing:0.080px;">n összeg -</span>
<span class="t" style="top:494.20px;font-size:15px;color:#111;left:1149.4px;letter-spacing:-0.150px;">Követel</span>
<div style="left:1270.4px;top:454px;width:1.3px;height:66px;background:#c6c6c6;"></div>
<div style="left:1271.7px;top:454px;width:1px;height:66px;background:#f4f4f4;"></div>
<div style="left:1257px;top:479px;width:11px;height:10px;border:1px solid #6596ee;background:rgba(255,255,255,.3);"></div>
<span class="t" style="top:467.80px;font-size:15px;color:#111;left:1274.4px;letter-spacing:0.119px;">Tranzakció</span>
<span class="t" style="top:485.40px;font-size:15px;color:#111;left:1274.4px;letter-spacing:0.289px;">szám</span>
<div style="left:1395.4px;top:454px;width:1.3px;height:66px;background:#c6c6c6;"></div>
<div style="left:1396.7px;top:454px;width:1px;height:66px;background:#f4f4f4;"></div>
<div style="left:1382px;top:479px;width:11px;height:10px;border:1px solid #6596ee;background:rgba(255,255,255,.3);"></div>
<span class="t" style="top:459.00px;font-size:15px;color:#111;left:1399.4px;letter-spacing:0.094px;">Külső</span>
<span class="t" style="top:476.60px;font-size:15px;color:#111;left:1399.4px;letter-spacing:0.200px;">bizonylat</span>
<span class="t" style="top:494.20px;font-size:15px;color:#111;left:1399.4px;letter-spacing:0.163px;">száma</span>
<div style="left:1520.4px;top:454px;width:1.3px;height:66px;background:#c6c6c6;"></div>
<div style="left:1521.7px;top:454px;width:1px;height:66px;background:#f4f4f4;"></div>
<div style="left:1507px;top:479px;width:11px;height:10px;border:1px solid #6596ee;background:rgba(255,255,255,.3);"></div>
<span class="t" style="top:478.00px;font-size:15px;color:#111;left:1524.4px;letter-spacing:0.067px;">OrderNo</span>
<div style="left:1645.4px;top:454px;width:1.3px;height:66px;background:#c6c6c6;"></div>
<div style="left:1646.7px;top:454px;width:1px;height:66px;background:#f4f4f4;"></div>
<div style="left:1632px;top:479px;width:11px;height:10px;border:1px solid #6596ee;background:rgba(255,255,255,.3);"></div>
<span class="t" style="top:467.80px;font-size:15px;color:#111;left:1649.4px;letter-spacing:0.071px;">Felöltött</span>
<span class="t" style="top:485.40px;font-size:15px;color:#111;left:1649.4px;letter-spacing:0.412px;">állományok</span>
<div style="left:1770.4px;top:454px;width:1.3px;height:66px;background:#c6c6c6;"></div>
<div style="left:1771.7px;top:454px;width:1px;height:66px;background:#f4f4f4;"></div>
<div style="left:1757px;top:479px;width:11px;height:10px;border:1px solid #6596ee;background:rgba(255,255,255,.3);"></div>
<span class="t" style="top:467.80px;font-size:15px;color:#111;left:1774.4px;letter-spacing:0.039px;">Fizetési</span>
<span class="t" style="top:485.40px;font-size:15px;color:#111;left:1774.4px;letter-spacing:0.223px;">határidő</span>
<div style="left:1895.4px;top:454px;width:1.3px;height:66px;background:#c6c6c6;"></div>
<div style="left:1896.7px;top:454px;width:1px;height:66px;background:#f4f4f4;"></div>
<div style="left:1883px;top:479px;width:11px;height:10px;border:1px solid #6596ee;background:rgba(255,255,255,.3);"></div>
<div style="left:975px;top:520px;width:921.4px;height:456px;overflow:hidden;background:#fff;">
<div style="left:68px;top:0px;width:853px;height:20px;background:#0078d7;"></div>
<div style="left:0;top:20px;width:921px;height:1px;background:#cbcbcb;"></div>
<div style="left:0;top:0px;width:68px;height:20px;background:linear-gradient(#f2f2f2,#e9e9e9 45%,#d8d8d8);"></div>
<span class="t" style="right:633.1000000000001px;top:3.79px;font-size:13.6px;color:#fff;font-family:'DejaVu Sans Condensed','Liberation Sans',sans-serif;letter-spacing:-0.182px;margin-right:0.182px;">3 175,00</span>
<span class="t" style="left:800.3px;top:3.79px;font-size:13.6px;color:#fff;font-family:'DejaVu Sans Condensed','Liberation Sans',sans-serif;letter-spacing:0.010px;">2020.10.31.</span>
<div style="left:0;top:41px;width:921px;height:1px;background:#cbcbcb;"></div>
<div style="left:0;top:21px;width:68px;height:20px;background:linear-gradient(#f2f2f2,#e9e9e9 45%,#d8d8d8);"></div>
<span class="t" style="right:633.1000000000001px;top:25.04px;font-size:13.6px;color:#000;font-family:'DejaVu Sans Condensed','Liberation Sans',sans-serif;letter-spacing:-0.182px;margin-right:0.182px;">6 707,00</span>
<span class="t" style="left:425.29999999999995px;top:25.04px;font-size:13.6px;color:#000;font-family:'DejaVu Sans Condensed','Liberation Sans',sans-serif;letter-spacing:-0.175px;">0006/060339</span>
<span class="t" style="left:800.3px;top:25.04px;font-size:13.6px;color:#000;font-family:'DejaVu Sans Condensed','Liberation Sans',sans-serif;letter-spacing:0.010px;">2018.11.28.</span>
<div style="left:0;top:63px;width:921px;height:1px;background:#cbcbcb;"></div>
<div style="left:0;top:42px;width:68px;height:21px;background:linear-gradient(#f2f2f2,#e9e9e9 45%,#d8d8d8);"></div>
<span class="t" style="right:758.1000000000001px;top:46.29px;font-size:13.6px;color:#000;font-family:'DejaVu Sans Condensed','Liberation Sans',sans-serif;letter-spacing:-0.248px;margin-right:0.248px;">21 480,00</span>
<span class="t" style="left:425.29999999999995px;top:46.29px;font-size:13.6px;color:#000;font-family:'DejaVu Sans Condensed','Liberation Sans',sans-serif;letter-spacing:-0.282px;">000644955 pénztári</span>
<span class="t" style="left:800.3px;top:46.29px;font-size:13.6px;color:#000;font-family:'DejaVu Sans Condensed','Liberation Sans',sans-serif;letter-spacing:0.010px;">2019.04.02.</span>
<div style="left:0;top:84px;width:921px;height:1px;background:#cbcbcb;"></div>
<div style="left:0;top:64px;width:68px;height:20px;background:linear-gradient(#f2f2f2,#e9e9e9 45%,#d8d8d8);"></div>
<span class="t" style="right:633.1000000000001px;top:67.54px;font-size:13.6px;color:#000;font-family:'DejaVu Sans Condensed','Liberation Sans',sans-serif;letter-spacing:-0.182px;margin-right:0.182px;">7 404,00</span>
<span class="t" style="left:425.29999999999995px;top:67.54px;font-size:13.6px;color:#000;font-family:'DejaVu Sans Condensed','Liberation Sans',sans-serif;letter-spacing:-0.175px;">0009/065118</span>
<span class="t" style="left:800.3px;top:67.54px;font-size:13.6px;color:#000;font-family:'DejaVu Sans Condensed','Liberation Sans',sans-serif;letter-spacing:0.010px;">2018.11.16.</span>
<div style="left:0;top:105px;width:921px;height:1px;background:#cbcbcb;"></div>
<div style="left:0;top:85px;width:68px;height:20px;background:linear-gradient(#f2f2f2,#e9e9e9 45%,#d8d8d8);"></div>
<span class="t" style="right:633.1000000000001px;top:88.79px;font-size:13.6px;color:#000;font-family:'DejaVu Sans Condensed','Liberation Sans',sans-serif;letter-spacing:-0.300px;margin-right:0.300px;">167 511,71</span>
<span class="t" style="left:425.29999999999995px;top:88.79px;font-size:13.6px;color:#000;font-family:'DejaVu Sans Condensed','Liberation Sans',sans-serif;letter-spacing:-0.151px;">0013/2021</span>
<span class="t" style="left:800.3px;top:88.79px;font-size:13.6px;color:#000;font-family:'DejaVu Sans Condensed','Liberation Sans',sans-serif;letter-spacing:0.010px;">2021.04.08.</span>
<div style="left:0;top:126px;width:921px;height:1px;background:#cbcbcb;"></div>
<div style="left:0;top:106px;width:68px;height:20px;background:linear-gradient(#f2f2f2,#e9e9e9 45%,#d8d8d8);"></div>
<span class="t" style="right:633.1000000000001px;top:110.04px;font-size:13.6px;color:#000;font-family:'DejaVu Sans Condensed','Liberation Sans',sans-serif;letter-spacing:-0.248px;margin-right:0.248px;">98 704,00</span>
<span class="t" style="left:425.29999999999995px;top:110.04px;font-size:13.6px;color:#000;font-family:'DejaVu Sans Condensed','Liberation Sans',sans-serif;letter-spacing:-0.175px;">0014/043490</span>
<span class="t" style="left:800.3px;top:110.04px;font-size:13.6px;color:#000;font-family:'DejaVu Sans Condensed','Liberation Sans',sans-serif;letter-spacing:0.010px;">2018.11.16.</span>
<div style="left:0;top:148px;width:921px;height:1px;background:#cbcbcb;"></div>
<div style="left:0;top:128px;width:68px;height:20px;background:linear-gradient(#f2f2f2,#e9e9e9 45%,#d8d8d8);"></div>
<span class="t" style="right:633.1000000000001px;top:131.29px;font-size:13.6px;color:#000;font-family:'DejaVu Sans Condensed','Liberation Sans',sans-serif;letter-spacing:-0.248px;margin-right:0.248px;">18 085,00</span>
<span class="t" style="left:425.29999999999995px;top:131.29px;font-size:13.6px;color:#000;font-family:'DejaVu Sans Condensed','Liberation Sans',sans-serif;letter-spacing:-0.175px;">0014/044986</span>
<span class="t" style="left:800.3px;top:131.29px;font-size:13.6px;color:#000;font-family:'DejaVu Sans Condensed','Liberation Sans',sans-serif;letter-spacing:0.010px;">2018.11.28.</span>
<div style="left:0;top:169px;width:921px;height:1px;background:#cbcbcb;"></div>
<div style="left:0;top:149px;width:68px;height:20px;background:linear-gradient(#f2f2f2,#e9e9e9 45%,#d8d8d8);"></div>
<span class="t" style="right:633.1000000000001px;top:152.54px;font-size:13.6px;color:#000;font-family:'DejaVu Sans Condensed','Liberation Sans',sans-serif;letter-spacing:-0.248px;margin-right:0.248px;">99 060,00</span>
<span class="t" style="left:425.29999999999995px;top:152.54px;font-size:13.6px;color:#000;font-family:'DejaVu Sans Condensed','Liberation Sans',sans-serif;letter-spacing:-0.005px;">0214/2</span>
<span class="t" style="left:800.3px;top:152.54px;font-size:13.6px;color:#000;font-family:'DejaVu Sans Condensed','Liberation Sans',sans-serif;letter-spacing:0.010px;">2019.02.13.</span>
<div style="left:0;top:190px;width:921px;height:1px;background:#cbcbcb;"></div>
<div style="left:0;top:170px;width:68px;height:20px;background:linear-gradient(#f2f2f2,#e9e9e9 45%,#d8d8d8);"></div>
<span class="t" style="right:633.1000000000001px;top:173.79px;font-size:13.6px;color:#000;font-family:'DejaVu Sans Condensed','Liberation Sans',sans-serif;letter-spacing:-0.300px;margin-right:0.300px;">381 000,00</span>
<span class="t" style="left:425.29999999999995px;top:173.79px;font-size:13.6px;color:#000;font-family:'DejaVu Sans Condensed','Liberation Sans',sans-serif;letter-spacing:-0.281px;">0327</span>
<span class="t" style="left:550.3px;top:173.79px;font-size:13.6px;color:#000;font-family:'DejaVu Sans Condensed','Liberation Sans',sans-serif;letter-spacing:-0.281px;">0327</span>
<span class="t" style="left:800.3px;top:173.79px;font-size:13.6px;color:#000;font-family:'DejaVu Sans Condensed','Liberation Sans',sans-serif;letter-spacing:0.010px;">2019.03.27.</span>
<div style="left:0;top:211px;width:921px;height:1px;background:#cbcbcb;"></div>
<div style="left:0;top:191px;width:68px;height:20px;background:linear-gradient(#f2f2f2,#e9e9e9 45%,#d8d8d8);"></div>
<span class="t" style="right:633.1000000000001px;top:195.04px;font-size:13.6px;color:#000;font-family:'DejaVu Sans Condensed','Liberation Sans',sans-serif;letter-spacing:-0.248px;margin-right:0.248px;">12 700,00</span>
<span class="t" style="left:425.29999999999995px;top:195.04px;font-size:13.6px;color:#000;font-family:'DejaVu Sans Condensed','Liberation Sans',sans-serif;letter-spacing:-0.199px;">04hó06hó</span>
<span class="t" style="left:800.3px;top:195.04px;font-size:13.6px;color:#000;font-family:'DejaVu Sans Condensed','Liberation Sans',sans-serif;letter-spacing:0.010px;">2019.04.10.</span>
<div style="left:0;top:233px;width:921px;height:1px;background:#cbcbcb;"></div>
<div style="left:0;top:212px;width:68px;height:21px;background:linear-gradient(#f2f2f2,#e9e9e9 45%,#d8d8d8);"></div>
<span class="t" style="right:758.1000000000001px;top:216.29px;font-size:13.6px;color:#000;font-family:'DejaVu Sans Condensed','Liberation Sans',sans-serif;">89,00</span>
<span class="t" style="left:800.3px;top:216.29px;font-size:13.6px;color:#000;font-family:'DejaVu Sans Condensed','Liberation Sans',sans-serif;letter-spacing:0.010px;">2019.05.20.</span>
<div style="left:0;top:254px;width:921px;height:1px;background:#cbcbcb;"></div>
<div style="left:0;top:234px;width:68px;height:20px;background:linear-gradient(#f2f2f2,#e9e9e9 45%,#d8d8d8);"></div>
<span class="t" style="right:758.1000000000001px;top:237.54px;font-size:13.6px;color:#000;font-family:'DejaVu Sans Condensed','Liberation Sans',sans-serif;letter-spacing:-0.182px;margin-right:0.182px;">5 000,00</span>
<span class="t" style="left:800.3px;top:237.54px;font-size:13.6px;color:#000;font-family:'DejaVu Sans Condensed','Liberation Sans',sans-serif;letter-spacing:0.010px;">2019.05.28.</span>
<div style="left:0;top:275px;width:921px;height:1px;background:#cbcbcb;"></div>
<div style="left:0;top:255px;width:68px;height:20px;background:linear-gradient(#f2f2f2,#e9e9e9 45%,#d8d8d8);"></div>
<span class="t" style="right:758.1000000000001px;top:258.79px;font-size:13.6px;color:#000;font-family:'DejaVu Sans Condensed','Liberation Sans',sans-serif;letter-spacing:-0.248px;margin-right:0.248px;">50 000,00</span>
<span class="t" style="left:800.3px;top:258.79px;font-size:13.6px;color:#000;font-family:'DejaVu Sans Condensed','Liberation Sans',sans-serif;letter-spacing:0.010px;">2025.07.11.</span>
<div style="left:0;top:296px;width:921px;height:1px;background:#cbcbcb;"></div>
<div style="left:0;top:276px;width:68px;height:20px;background:linear-gradient(#f2f2f2,#e9e9e9 45%,#d8d8d8);"></div>
<span class="t" style="right:758.1000000000001px;top:280.04px;font-size:13.6px;color:#000;font-family:'DejaVu Sans Condensed','Liberation Sans',sans-serif;letter-spacing:-0.248px;margin-right:0.248px;">25 000,00</span>
<span class="t" style="left:800.3px;top:280.04px;font-size:13.6px;color:#000;font-family:'DejaVu Sans Condensed','Liberation Sans',sans-serif;letter-spacing:0.010px;">2025.07.11.</span>
<div style="left:0;top:318px;width:921px;height:1px;background:#cbcbcb;"></div>
<div style="left:0;top:298px;width:68px;height:20px;background:linear-gradient(#f2f2f2,#e9e9e9 45%,#d8d8d8);"></div>
<span class="t" style="right:633.1000000000001px;top:301.29px;font-size:13.6px;color:#000;font-family:'DejaVu Sans Condensed','Liberation Sans',sans-serif;letter-spacing:-0.248px;margin-right:0.248px;">12 700,00</span>
<span class="t" style="left:425.29999999999995px;top:301.29px;font-size:13.6px;color:#000;font-family:'DejaVu Sans Condensed','Liberation Sans',sans-serif;letter-spacing:-0.281px;">0810</span>
<span class="t" style="left:800.3px;top:301.29px;font-size:13.6px;color:#000;font-family:'DejaVu Sans Condensed','Liberation Sans',sans-serif;letter-spacing:0.010px;">2019.08.10.</span>
<div style="left:0;top:339px;width:921px;height:1px;background:#cbcbcb;"></div>
<div style="left:0;top:319px;width:68px;height:20px;background:linear-gradient(#f2f2f2,#e9e9e9 45%,#d8d8d8);"></div>
<span class="t" style="right:633.1000000000001px;top:322.54px;font-size:13.6px;color:#000;font-family:'DejaVu Sans Condensed','Liberation Sans',sans-serif;letter-spacing:-0.300px;margin-right:0.300px;">900 000,00</span>
<span class="t" style="left:425.29999999999995px;top:322.54px;font-size:13.6px;color:#000;font-family:'DejaVu Sans Condensed','Liberation Sans',sans-serif;letter-spacing:-0.280px;">0901 Kiegyenlítések</span>
<span class="t" style="left:800.3px;top:322.54px;font-size:13.6px;color:#000;font-family:'DejaVu Sans Condensed','Liberation Sans',sans-serif;letter-spacing:0.010px;">2025.07.01.</span>
<div style="left:0;top:360px;width:921px;height:1px;background:#cbcbcb;"></div>
<div style="left:0;top:340px;width:68px;height:20px;background:linear-gradient(#f2f2f2,#e9e9e9 45%,#d8d8d8);"></div>
<span class="t" style="right:758.1000000000001px;top:343.79px;font-size:13.6px;color:#000;font-family:'DejaVu Sans Condensed','Liberation Sans',sans-serif;letter-spacing:-0.300px;margin-right:0.300px;">200 000,00</span>
<span class="t" style="left:800.3px;top:343.79px;font-size:13.6px;color:#000;font-family:'DejaVu Sans Condensed','Liberation Sans',sans-serif;letter-spacing:0.010px;">2025.09.05.</span>
<div style="left:0;top:381px;width:921px;height:1px;background:#cbcbcb;"></div>
<div style="left:0;top:361px;width:68px;height:20px;background:linear-gradient(#f2f2f2,#e9e9e9 45%,#d8d8d8);"></div>
<span class="t" style="right:633.1000000000001px;top:365.04px;font-size:13.6px;color:#000;font-family:'DejaVu Sans Condensed','Liberation Sans',sans-serif;letter-spacing:-0.300px;margin-right:0.300px;">200 000,00</span>
<span class="t" style="left:425.29999999999995px;top:365.04px;font-size:13.6px;color:#000;font-family:'DejaVu Sans Condensed','Liberation Sans',sans-serif;letter-spacing:-0.083px;">0905HUF-os</span>
<span class="t" style="left:800.3px;top:365.04px;font-size:13.6px;color:#000;font-family:'DejaVu Sans Condensed','Liberation Sans',sans-serif;letter-spacing:0.010px;">2025.09.05.</span>
<div style="left:0;top:403px;width:921px;height:1px;background:#cbcbcb;"></div>
<div style="left:0;top:382px;width:68px;height:21px;background:linear-gradient(#f2f2f2,#e9e9e9 45%,#d8d8d8);"></div>
<span class="t" style="right:758.1000000000001px;top:386.29px;font-size:13.6px;color:#000;font-family:'DejaVu Sans Condensed','Liberation Sans',sans-serif;letter-spacing:-0.300px;margin-right:0.300px;">127 000,00</span>
<span class="t" style="left:425.29999999999995px;top:386.29px;font-size:13.6px;color:#000;font-family:'DejaVu Sans Condensed','Liberation Sans',sans-serif;letter-spacing:-0.102px;">0915 jóváíró</span>
<span class="t" style="left:800.3px;top:386.29px;font-size:13.6px;color:#000;font-family:'DejaVu Sans Condensed','Liberation Sans',sans-serif;letter-spacing:0.010px;">2025.09.15.</span>
<div style="left:0;top:424px;width:921px;height:1px;background:#cbcbcb;"></div>
<div style="left:0;top:404px;width:68px;height:20px;background:linear-gradient(#f2f2f2,#e9e9e9 45%,#d8d8d8);"></div>
<span class="t" style="right:633.1000000000001px;top:407.54px;font-size:13.6px;color:#000;font-family:'DejaVu Sans Condensed','Liberation Sans',sans-serif;letter-spacing:-0.182px;margin-right:0.182px;">6 090,00</span>
<span class="t" style="left:425.29999999999995px;top:407.54px;font-size:13.6px;color:#000;font-family:'DejaVu Sans Condensed','Liberation Sans',sans-serif;letter-spacing:-0.099px;">1,00271E+11</span>
<span class="t" style="left:800.3px;top:407.54px;font-size:13.6px;color:#000;font-family:'DejaVu Sans Condensed','Liberation Sans',sans-serif;letter-spacing:0.010px;">2019.01.07.</span>
<div style="left:0;top:445px;width:921px;height:1px;background:#cbcbcb;"></div>
<div style="left:0;top:425px;width:68px;height:20px;background:linear-gradient(#f2f2f2,#e9e9e9 45%,#d8d8d8);"></div>
<span class="t" style="right:633.1000000000001px;top:428.79px;font-size:13.6px;color:#000;font-family:'DejaVu Sans Condensed','Liberation Sans',sans-serif;letter-spacing:-0.182px;margin-right:0.182px;">6 090,00</span>
<span class="t" style="left:425.29999999999995px;top:428.79px;font-size:13.6px;color:#000;font-family:'DejaVu Sans Condensed','Liberation Sans',sans-serif;letter-spacing:-0.096px;">1,00E+11</span>
<span class="t" style="left:800.3px;top:428.79px;font-size:13.6px;color:#000;font-family:'DejaVu Sans Condensed','Liberation Sans',sans-serif;letter-spacing:0.010px;">2019.01.07.</span>
<div style="left:0;top:466px;width:921px;height:1px;background:#cbcbcb;"></div>
<div style="left:0;top:446px;width:68px;height:20px;background:linear-gradient(#f2f2f2,#e9e9e9 45%,#d8d8d8);"></div>
<span class="t" style="right:633.1000000000001px;top:450.04px;font-size:13.6px;color:#000;font-family:'DejaVu Sans Condensed','Liberation Sans',sans-serif;letter-spacing:-0.130px;margin-right:0.130px;">300,00</span>
<span class="t" style="left:425.29999999999995px;top:450.04px;font-size:13.6px;color:#000;font-family:'DejaVu Sans Condensed','Liberation Sans',sans-serif;letter-spacing:-0.099px;">1,51005E+11</span>
<span class="t" style="left:800.3px;top:450.04px;font-size:13.6px;color:#000;font-family:'DejaVu Sans Condensed','Liberation Sans',sans-serif;letter-spacing:0.010px;">2019.01.02.</span>
<div style="left:170px;top:0;width:2px;height:457px;background:#d3d3d3;"></div>
<div style="left:295px;top:0;width:2px;height:457px;background:#d3d3d3;"></div>
<div style="left:420px;top:0;width:2px;height:457px;background:#d3d3d3;"></div>
<div style="left:545px;top:0;width:2px;height:457px;background:#d3d3d3;"></div>
<div style="left:670px;top:0;width:2px;height:457px;background:#d3d3d3;"></div>
<div style="left:795px;top:0;width:2px;height:457px;background:#d3d3d3;"></div>
<div style="left:920px;top:0;width:2px;height:457px;background:#d3d3d3;"></div>
<svg style="left:3px;top:6px" width="4.500" height="7.500" viewBox="0 0 4.500 7.500"><path d="M0 0l4.500 3.750-4.500 3.750z" fill="#5b8df5"/></svg>
</div>
<div style="left:975px;top:453px;width:68px;height:67px;background:linear-gradient(#f3f3f3,#ececec 30%,#e0e0e0 65%,#d3d3d3);"></div>
<svg style="left:980px;top:481px" width="15" height="14" viewBox="0 0 15 14"><rect x=".5" y=".5" width="14" height="13" rx="1" fill="#f5f08a" stroke="#bdb76b"/><rect x="1" y="5.500" width="13" height="3" fill="#5b8df0"/><path d="M4 3.500h7M4 10.500h7" stroke="#222" stroke-width="1.300"/><path d="M4 7h4" stroke="#c8d8fa" stroke-width="1"/></svg>
<div style="left:1896.3px;top:453px;width:13.7px;height:524px;background:#f0f0f0;"></div>
<div style="left:1897px;top:474.2px;width:13px;height:20.8px;background:#cdcdcd;"></div>
<svg style="left:1901px;top:460px" width="13" height="8" viewBox="0 0 13 8"><path d="M1 7l5.500-5.500L12 7" stroke="#444" stroke-width="1.800" fill="none"/></svg>
<svg style="left:1901px;top:961px" width="13" height="8" viewBox="0 0 13 8"><path d="M1 1l5.500 5.500L12 1" stroke="#444" stroke-width="1.800" fill="none"/></svg>
<div style="left:975px;top:976px;width:935px;height:21.2px;background:#f0f0f0;"></div>
<div style="left:1377px;top:978px;width:497px;height:17.8px;background:#cdcdcd;"></div>
<svg style="left:981px;top:981.5px" width="8" height="11" viewBox="0 0 8 11"><path d="M6.500 1L2 5.500 6.500 10" stroke="#505050" stroke-width="1.900" fill="none"/></svg>
<svg style="left:1881.5px;top:981.5px" width="8" height="11" viewBox="0 0 8 11"><path d="M1.500 1L6 5.500 1.500 10" stroke="#505050" stroke-width="1.900" fill="none"/></svg>
<div style="left:1265px;top:399.2px;width:151.7px;height:49.4px;border:4.6px solid #22b14c;"></div>
<div style="left:1752.3px;top:445px;width:127.6px;height:106.7px;border:4.6px solid #22b14c;"></div>
<div style="left:0px;top:999.4px;width:1910px;height:4.6px;background:#f0f0f0;"></div>
<div style="left:0px;top:997px;width:409.7px;height:2.4px;background:#f0f0f0;"></div>
<div style="left:216.5px;top:1001.5px;width:1.2px;height:3px;background:#9a9a9a;"></div>
<div style="left:424.4px;top:1001.5px;width:1.2px;height:3px;background:#9a9a9a;"></div>
<div style="left:845px;top:1001.5px;width:1.2px;height:3px;background:#9a9a9a;"></div>
<div style="left:1660.5px;top:1002.3px;width:237.5px;height:2px;background:#c6c6c6;border-top:1px solid #adadad;"></div>
<div style="left:1776px;top:1002px;width:1.5px;height:2px;background:#e8c020;"></div>
<div style="left:1899.5px;top:1002px;width:1.5px;height:2px;background:#3a4ae0;"></div>
</body></html>
